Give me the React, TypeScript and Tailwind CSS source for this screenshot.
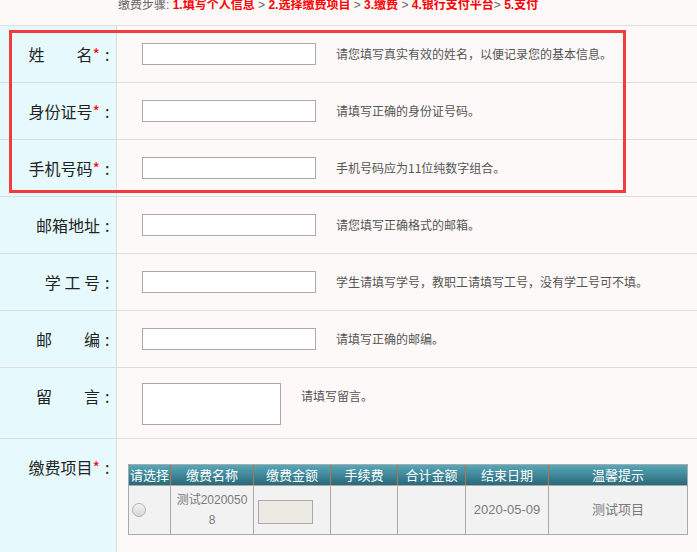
import React from "react";

const cjk = { fontFamily: '"Noto Sans CJK SC", "Microsoft YaHei", sans-serif' };
const mixed = { fontFamily: '"Liberation Sans", "Noto Sans CJK SC", sans-serif' };

interface Field {
  label: string;
  required?: boolean;
  hint: string;
}

const fields: Field[] = [
  { label: "姓　　名", required: true, hint: "请您填写真实有效的姓名，以便记录您的基本信息。" },
  { label: "身份证号", required: true, hint: "请填写正确的身份证号码。" },
  { label: "手机号码", required: true, hint: "手机号码应为11位纯数字组合。" },
  { label: "邮箱地址", hint: "请您填写正确格式的邮箱。" },
  { label: "学 工 号", hint: "学生请填写学号，教职工请填写工号，没有学工号可不填。" },
  { label: "邮　　编", hint: "请填写正确的邮编。" },
];

const columns = [
  { title: "请选择", width: 42 },
  { title: "缴费名称", width: 83 },
  { title: "缴费金额", width: 77 },
  { title: "手续费", width: 67 },
  { title: "合计金额", width: 68 },
  { title: "结束日期", width: 83 },
  { title: "温馨提示", width: 139 },
];

function Label({ text, required }: { text: string; required?: boolean }) {
  return (
    <span className="whitespace-pre text-[16px] leading-[24px] text-[#222]" style={cjk}>
      {text}
      {required && <span className="text-[#f00]">*</span>}
      <span className="inline-block w-[16px] pl-[5px]">:</span>
    </span>
  );
}

function Step({ children }: { children: React.ReactNode }) {
  return <span className="font-bold text-[#ff0000]">{children}</span>;
}

export default function App() {
  return (
    <div className="relative w-[697px] h-[552px] overflow-hidden bg-[#fdf9f8]" style={cjk}>
      <div className="h-[27px] border-b border-[#dddddd]">
        <div className="pl-[118px] -mt-[1px] text-[12px] leading-[12px] text-[#666]" style={mixed}>
          缴费步骤: <Step>1.填写个人信息</Step> &gt; <Step>2.选择缴费项目</Step> &gt; <Step>3.缴费</Step> &gt;{" "}
          <Step>4.银行支付平台</Step>&gt; <Step>5.支付</Step>
        </div>
      </div>

      {fields.map((f) => (
        <div key={f.label} className="flex h-[57px] border-b border-[#dddddd]">
          <div className="w-[117px] shrink-0 flex items-center justify-end border-r border-[#dddddd] bg-[#e6fafe]">
            <Label text={f.label} required={f.required} />
          </div>
          <div className="flex items-center pl-[25px]">
            <input className="w-[174px] h-[22px] border border-[#aaaaaa] bg-white outline-none" />
            <span className="ml-[20px] text-[12px] text-[#555]">{f.hint}</span>
          </div>
        </div>
      ))}

      <div className="flex h-[71px] border-b border-[#dddddd]">
        <div className="w-[117px] shrink-0 flex justify-end pt-[16px] border-r border-[#dddddd] bg-[#e6fafe]">
          <Label text="留　　言" />
        </div>
        <div className="flex items-start pl-[25px] pt-[15px]">
          <textarea className="w-[139px] h-[42px] border border-[#aaaaaa] bg-white resize-none outline-none" />
          <span className="ml-[20px] mt-[5px] text-[12px] leading-[16px] text-[#555]">请填写留言。</span>
        </div>
      </div>

      <div className="flex h-[120px]">
        <div className="w-[117px] shrink-0 flex justify-end pt-[16px] border-r border-[#dddddd] bg-[#e6fafe]">
          <Label text="缴费项目" required />
        </div>
        <div className="pl-[11px] pt-[25px]">
          <table className="table-fixed border-collapse text-[12px]" style={mixed}>
            <colgroup>
              {columns.map((c) => (
                <col key={c.title} style={{ width: c.width }} />
              ))}
            </colgroup>
            <thead>
              <tr className="h-[21px] bg-gradient-to-b from-[#58a7ba] to-[#276676]">
                {columns.map((c, i) => (
                  <th
                    key={c.title}
                    className={
                      "border-y border-[#aaaaaa] p-0 font-normal text-[13px] leading-[19px] text-white " +
                      (i === 0 ? "border-l border-l-[#aaaaaa] " : "border-l border-l-[#b8743e] ") +
                      (i === columns.length - 1 ? "border-r border-r-[#aaaaaa]" : "")
                    }
                  >
                    {c.title}
                  </th>
                ))}
              </tr>
            </thead>
            <tbody>
              <tr className="h-[49px] bg-[#f2f2f2] text-[#7a7a7a]">
                <td className="border border-[#aaaaaa] text-left align-middle pl-[3px] pr-0">
                  <span className="inline-block w-[14px] h-[14px] mt-[4px] rounded-full border border-[#b0b0b0] bg-gradient-to-b from-[#f4f4f4] to-[#d6d6d6]" />
                </td>
                <td className="border border-[#aaaaaa] px-[5px] text-center leading-[20px] break-all">测试20200508</td>
                <td className="border border-[#aaaaaa] pl-[4px]">
                  <div className="w-[55px] h-[24px] mt-[3px] border border-[#aaaaaa] bg-[#ebebe4]" />
                </td>
                <td className="border border-[#aaaaaa]"></td>
                <td className="border border-[#aaaaaa]"></td>
                <td className="border border-[#aaaaaa] text-center text-[13px]">2020-05-09</td>
                <td className="border border-[#aaaaaa] text-center text-[13px]">测试项目</td>
              </tr>
            </tbody>
          </table>
        </div>
      </div>

      <div className="absolute left-[9px] top-[30px] w-[617px] h-[163px] border-[3px] border-[#f23b3b] pointer-events-none" />
    </div>
  );
}
